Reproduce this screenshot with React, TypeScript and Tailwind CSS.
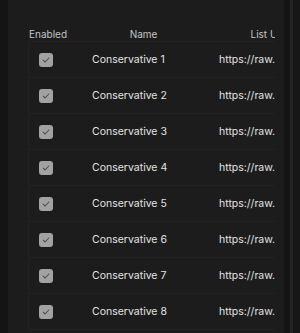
const rows = [1, 2, 3, 4, 5, 6, 7, 8]

function Check() {
    return (
        <div className="w-[14px] h-[14px] rounded-[3px] bg-[#a2a2a2] flex items-center justify-center">
            <svg width="10" height="10" viewBox="0 0 10 10" fill="none">
                <path d="M2.2 5.2 L4.2 7 L7.8 3" stroke="#505050" strokeWidth="1.1" strokeLinecap="round" strokeLinejoin="round" />
            </svg>
        </div>
    )
}

export default function App() {
    return (
        <div className="w-[300px] h-[333px] bg-[#151515] flex overflow-hidden" style={{ fontFamily: 'Inter, "Liberation Sans", sans-serif' }}>
            <div className="w-[8px] shrink-0 bg-[#141414]" />
            {/* main panel */}
            <div className="w-[276px] shrink-0 bg-[#1c1c1c] pl-[20px] pt-[27px]">
                <div className="w-[247px] overflow-hidden">
                    <div className="w-[320px]">
                        <div className="flex h-[14px] items-center text-[10px] text-[#c4c4c4] whitespace-nowrap">
                            <div className="w-[40px] shrink-0 flex justify-center">Enabled</div>
                            <div className="w-[150px] shrink-0 flex justify-center border-l border-[#232323]">Name</div>
                            <div className="w-[104px] shrink-0 flex justify-center">List URL</div>
                        </div>
                        <div className="border-l border-[#222222]">
                            {rows.map((n) => (
                                <div key={n} className="flex h-[36px] items-center border-t border-[#222222] text-[10.5px] text-[#e2e2e2]">
                                    <div className="w-[40px] shrink-0 pl-[10px]">
                                        <Check />
                                    </div>
                                    <div className="w-[150px] shrink-0 pl-[23px]">Conservative {n}</div>
                                    <div className="w-[104px] shrink-0 whitespace-nowrap">https://raw.</div>
                                </div>
                            ))}
                            <div className="border-t border-[#222222]" />
                        </div>
                    </div>
                </div>
            </div>
            {/* right rail */}
            <div className="w-[6px] shrink-0 bg-[#141414]" />
            <div className="w-[3px] shrink-0 bg-[#242424]" />
            <div className="flex-1 bg-[#171717]" />
        </div>
    )
}
